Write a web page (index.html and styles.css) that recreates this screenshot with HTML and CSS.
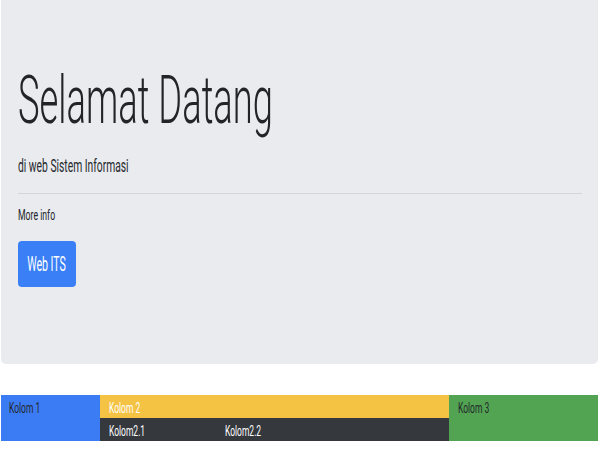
FILE: index.html
```html
<!DOCTYPE html>
<html lang="id">
<head>
<meta charset="utf-8">
<title>Selamat Datang</title>
<link rel="stylesheet" href="styles.css">
</head>
<body>
  <section class="jumbotron">
    <h1 class="display">Selamat Datang</h1>
    <p class="lead">di web Sistem Informasi</p>
    <hr class="divider">
    <p class="info">More info</p>
    <a class="btn" href="#"><span class="btn-label">Web ITS</span></a>
  </section>

  <div class="row">
    <div class="col col-1"><span class="txt">Kolom 1</span></div>
    <div class="col col-2">
      <div class="sub-head"><span class="txt">Kolom 2</span></div>
      <div class="sub-row">
        <div class="sub-col"><span class="txt">Kolom2.1</span></div>
        <div class="sub-col"><span class="txt">Kolom2.2</span></div>
      </div>
    </div>
    <div class="col col-3"><span class="txt">Kolom 3</span></div>
  </div>
</body>
</html>
```

FILE: styles.css
```css
* { box-sizing: border-box; }

html, body {
  margin: 0;
  padding: 0;
  background: #ffffff;
}

body {
  font-family: Roboto, "Liberation Sans", Arial, sans-serif;
  color: #212529;
}

.jumbotron {
  margin: 0 2px 0 1px;
  height: 364px;
  padding: 61px 16px 0 17px;
  background: #e9ebef;
  border-radius: 0 0 5px 5px;
}

.display {
  margin: 0;
  font-size: 66px;
  font-weight: 300;
  line-height: 80px;
  color: #222427;
  transform: scaleX(0.551);
  transform-origin: 0 50%;
  white-space: nowrap;
}

.lead {
  margin: 11px 0 0;
  font-size: 18px;
  font-weight: 400;
  line-height: 27px;
  color: #26292d;
  transform: scaleX(0.572);
  transform-origin: 0 50%;
  white-space: nowrap;
}

.divider {
  margin: 14px 0 0;
  border: 0;
  border-top: 1px solid #d3d5d8;
  height: 0;
}

.info {
  margin: 10px 0 0;
  font-size: 15px;
  line-height: 22px;
  transform: scaleX(0.58);
  transform-origin: 0 50%;
  white-space: nowrap;
}

.btn {
  margin-top: 15px;
  width: 58px;
  height: 46px;
  display: flex;
  align-items: center;
  justify-content: center;
  background: #3a7ff6;
  border-radius: 4px;
  text-decoration: none;
  color: #ffffff;
  font-size: 20px;
  line-height: 28px;
}

.btn-label {
  display: inline-block;
  white-space: nowrap;
  transform: scaleX(0.53);
  transform-origin: 50% 50%;
}

.row {
  margin: 31px 2px 0 1px;
  display: grid;
  grid-template-columns: 99px 349px 1fr;
  height: 46px;
}

.col {
  font-size: 15px;
  line-height: 23px;
}

.txt {
  display: inline-block;
  white-space: nowrap;
  padding-top: 2px;
  transform: scaleX(0.565);
  transform-origin: 0 50%;
}

.col-1 {
  background: #3b7cf4;
  color: #23272b;
  padding: 0 8px;
}

.col-2 {
  display: flex;
  flex-direction: column;
  color: #ffffff;
}

.sub-head {
  height: 23px;
  background: #f5c344;
  padding: 0 9px;
}

.sub-row {
  height: 23px;
  background: #35393e;
  display: grid;
  grid-template-columns: 1fr 2fr;
}

.sub-col {
  padding: 0 9px;
}

.col-3 {
  background: #52a452;
  color: #23272b;
  padding: 0 9px;
}
```
